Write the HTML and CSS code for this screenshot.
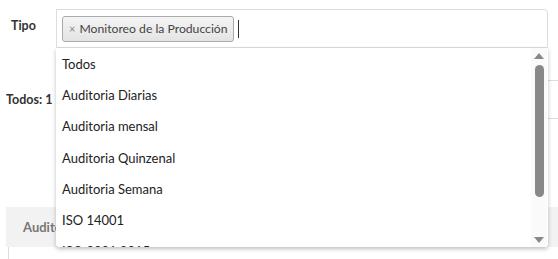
FILE: index.html
```html
<!DOCTYPE html>
<html lang="es">
<head>
<meta charset="UTF-8">
<meta name="viewport" content="width=device-width, initial-scale=1.0">
<title>Filtro de Auditorias</title>
<link rel="stylesheet" href="styles.css">
</head>
<body>
<div class="page">
    <div class="filter-row">
        <label class="filter-label">Tipo</label>
        <div class="multiselect">
            <div class="select-box">
                <span class="chip"><span class="chip-x">&times;</span>Monitoreo de la Producción</span>
                <span class="caret"></span>
            </div>
            <div class="dropdown">
                <ul class="options">
                    <li>Todos</li>
                    <li>Auditoria Diarias</li>
                    <li>Auditoria mensal</li>
                    <li>Auditoria Quinzenal</li>
                    <li>Auditoria Semana</li>
                    <li>ISO 14001</li>
                    <li>ISO 9001:2015</li>
                </ul>
                <div class="scrollbar">
                    <span class="arrow arrow-up"></span>
                    <span class="thumb"></span>
                    <span class="arrow arrow-down"></span>
                </div>
            </div>
        </div>
    </div>

    <div class="summary-row">
        <span class="summary-count">Todos: 1</span>
        <div class="summary-lines"></div>
    </div>

    <div class="grid">
        <div class="grid-head">Auditoria</div>
        <div class="grid-body"></div>
    </div>
</div>
</body>
</html>
```

FILE: styles.css
```css
body {
    margin: 0;
    font-family: Lato, "Noto Sans", sans-serif;
    font-size: 12.5px;
    color: #222;
    background: #fff;
}
.page {
    position: relative;
    height: 259px;
    overflow: hidden;
}
.filter-row {
    display: flex;
    padding-top: 9px;
}
.filter-label {
    width: 45px;
    padding-left: 11px;
    padding-top: 9px;
    font-weight: bold;
    color: #333;
}
.multiselect {
    position: relative;
    width: 492px;
}
.select-box {
    display: flex;
    align-items: center;
    height: 37px;
    border: 1px solid #ddd;
    border-radius: 0 4px 0 0;
    padding-left: 5px;
    box-sizing: content-box;
}
.chip {
    display: flex;
    align-items: center;
    height: 24px;
    padding: 0 5px 0 6px;
    border: 1px solid #aaa;
    border-radius: 3px;
    background: linear-gradient(#f4f4f4, #e4e4e4);
    color: #444;
    font-size: 12.2px;
    white-space: nowrap;
}
.chip-x {
    font-size: 11px;
    color: #888;
    margin-right: 4px;
}
.caret {
    width: 1px;
    height: 18px;
    margin-left: 4px;
    background: #333;
}
.dropdown {
    position: absolute;
    left: 0;
    top: 39px;
    width: 492px;
    height: 199px;
    display: flex;
    background: #fff;
    box-shadow: 0 2px 4px rgba(0, 0, 0, 0.25);
    border-radius: 0 0 3px 3px;
    z-index: 2;
}
.options {
    flex: 1;
    list-style: none;
    margin: 0;
    padding: 1px 0 0;
    overflow: hidden;
}
.options li {
    height: 31.2px;
    line-height: 31px;
    padding-left: 6px;
    font-size: 13px;
    white-space: nowrap;
}
.scrollbar {
    width: 16px;
    margin-right: 1px;
    background: #fafafa;
    display: flex;
    flex-direction: column;
    align-items: center;
    padding-top: 5px;
}
.arrow {
    width: 0;
    height: 0;
    border-left: 5px solid transparent;
    border-right: 5px solid transparent;
}
.arrow-up {
    border-bottom: 6px solid #888;
}
.arrow-down {
    border-top: 6px solid #888;
    margin-top: 40px;
}
.thumb {
    width: 9px;
    height: 132px;
    margin-top: 6px;
    background: #888;
    border-radius: 5px;
}
.summary-row {
    display: flex;
    align-items: center;
    margin-top: 32px;
    height: 39px;
}
.summary-count {
    width: 56px;
    padding-left: 6px;
    box-sizing: border-box;
    font-weight: bold;
    color: #333;
}
.summary-lines {
    flex: 1;
    align-self: stretch;
    border-top: 1px solid #ddd;
    border-bottom: 1px solid #ddd;
}
.grid {
    margin: 88px 0 0 6px;
}
.grid-head {
    height: 40px;
    line-height: 40px;
    padding-left: 17px;
    background: #f2f2f2;
    color: #777;
    font-weight: bold;
    font-size: 13px;
}
.grid-body {
    height: 20px;
    margin-left: 2px;
    border-left: 1px solid #ddd;
    background: #fff;
}
```
